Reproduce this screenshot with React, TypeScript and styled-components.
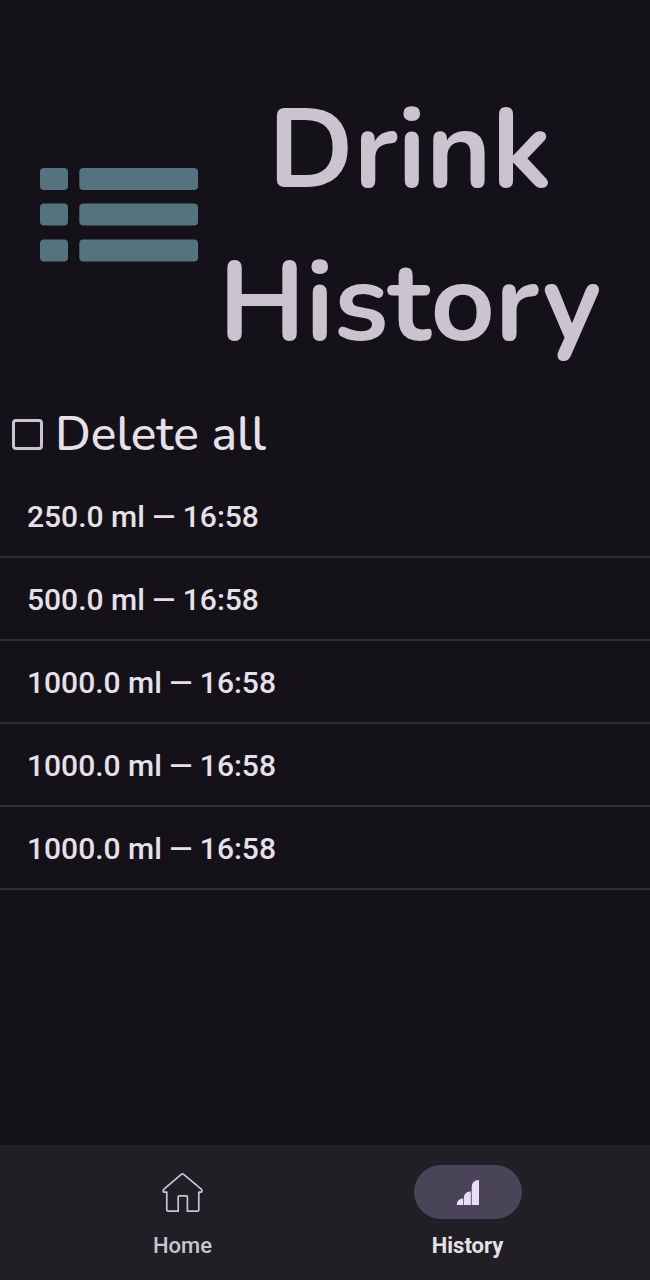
import React from 'react';
import styled, { createGlobalStyle } from 'styled-components';

const GlobalStyle = createGlobalStyle`
  *, *::before, *::after { box-sizing: border-box; }
  body { margin: 0; background: #141218; color: #e6e0e9; font-family: Roboto, sans-serif; }
`;

const Screen = styled.div`
  display: flex;
  flex-direction: column;
  min-height: 100vh;
`;

const Content = styled.main`
  flex: 1;
`;

const Header = styled.header`
  display: flex;
  align-items: center;
  gap: 12px;
  padding: 74px 40px 23px 40px;
`;

const ListIcon = styled.svg`
  flex: none;
  width: 158px;
  height: 94px;
  margin-bottom: 24px;
  fill: #54737f;
`;

const Title = styled.h1`
  flex: 1;
  margin: 0;
  color: #cac4d0;
  font-family: Nunito, Lato, sans-serif;
  font-size: 112px;
  font-weight: 700;
  line-height: 153px;
  text-align: center;
`;

const DeleteAll = styled.label`
  display: flex;
  align-items: center;
  gap: 12px;
  padding: 0 12px;
  font-family: Nunito, Lato, sans-serif;
  font-size: 48px;
  font-weight: 500;
  line-height: 62px;
`;

const Checkbox = styled.input`
  appearance: none;
  flex: none;
  width: 31px;
  height: 31px;
  margin: 0;
  border: 3px solid #cac4d0;
  border-radius: 4px;
  &:checked { background: #cac4d0; }
`;

const Drinks = styled.ul`
  margin: 10px 0 0;
  padding: 0;
  list-style: none;
`;

const Drink = styled.li`
  height: 83px;
  padding: 0 27px;
  border-bottom: 2px solid #2f2d33;
  font-size: 30px;
  font-weight: 500;
  line-height: 84px;
`;

const NavBar = styled.nav`
  display: grid;
  grid-template-columns: 1fr 1fr;
  gap: 14px;
  height: 135px;
  padding: 20px 47px;
  background: #211f26;
`;

const NavItem = styled.button<{ $active?: boolean }>`
  display: flex;
  flex-direction: column;
  align-items: center;
  gap: 13px;
  padding: 0;
  border: 0;
  background: none;
  color: ${(p) => (p.$active ? '#e6e0e9' : '#cac4d0')};
  font-family: inherit;
  font-size: 22px;
  font-weight: ${(p) => (p.$active ? 700 : 500)};
  line-height: 28px;
`;

const Indicator = styled.span<{ $active?: boolean }>`
  display: flex;
  align-items: center;
  justify-content: center;
  width: 108px;
  height: 54px;
  border-radius: 27px;
  background: ${(p) => (p.$active ? '#4a4458' : 'transparent')};
`;

const drinks = [
  { amount: '250.0', time: '16:58' },
  { amount: '500.0', time: '16:58' },
  { amount: '1000.0', time: '16:58' },
  { amount: '1000.0', time: '16:58' },
  { amount: '1000.0', time: '16:58' },
];

function HomeIcon() {
  return (
    <svg width="42" height="42" viewBox="0 0 42 42" fill="none" stroke="#cac4d0" strokeWidth="1.7" strokeLinejoin="round" aria-hidden="true">
      <path d="M19 3.6Q20.5 2.2 22 3.6L39.2 18.2Q40.6 19.4 39.6 21.2H36.8V39Q36.8 40.2 35.6 40.2H25.4V25.8Q25.4 24.8 24.4 24.8H17.2Q16.2 24.8 16.2 25.8V40.2H6Q4.8 40.2 4.8 39V21.2H1.8Q.6 19.4 2 18.2Z" />
    </svg>
  );
}

function HistoryIcon() {
  return (
    <svg width="24" height="26" viewBox="0 0 24 26" fill="#e8def8" aria-hidden="true">
      <path d="M.8 26C.8 21.8 3.3 19.4 7.2 19.4V26Z" />
      <path d="M7.9 26V18.4C7.9 15 10.6 12.4 14.8 12.4V26Z" />
      <path d="M15.7 26V8.2C15.7 3.8 18.4 1 23 1V26Z" />
    </svg>
  );
}

export default function App() {
  return (
    <Screen>
      <GlobalStyle />
      <Content>
        <Header>
          <ListIcon viewBox="0 0 158 94" aria-hidden="true">
            {[0, 35.5, 71.5].map((y) => (
              <React.Fragment key={y}>
                <rect x="0" y={y} width="28" height="22" rx="4" />
                <rect x="39.3" y={y} width="118.7" height="22" rx="4" />
              </React.Fragment>
            ))}
          </ListIcon>
          <Title>Drink History</Title>
        </Header>
        <DeleteAll>
          <Checkbox type="checkbox" />
          Delete all
        </DeleteAll>
        <Drinks>
          {drinks.map((d, i) => (
            <Drink key={i}>{`${d.amount} ml — ${d.time}`}</Drink>
          ))}
        </Drinks>
      </Content>
      <NavBar>
        <NavItem type="button">
          <Indicator><HomeIcon /></Indicator>
          Home
        </NavItem>
        <NavItem type="button" $active aria-current="page">
          <Indicator $active><HistoryIcon /></Indicator>
          History
        </NavItem>
      </NavBar>
    </Screen>
  );
}
